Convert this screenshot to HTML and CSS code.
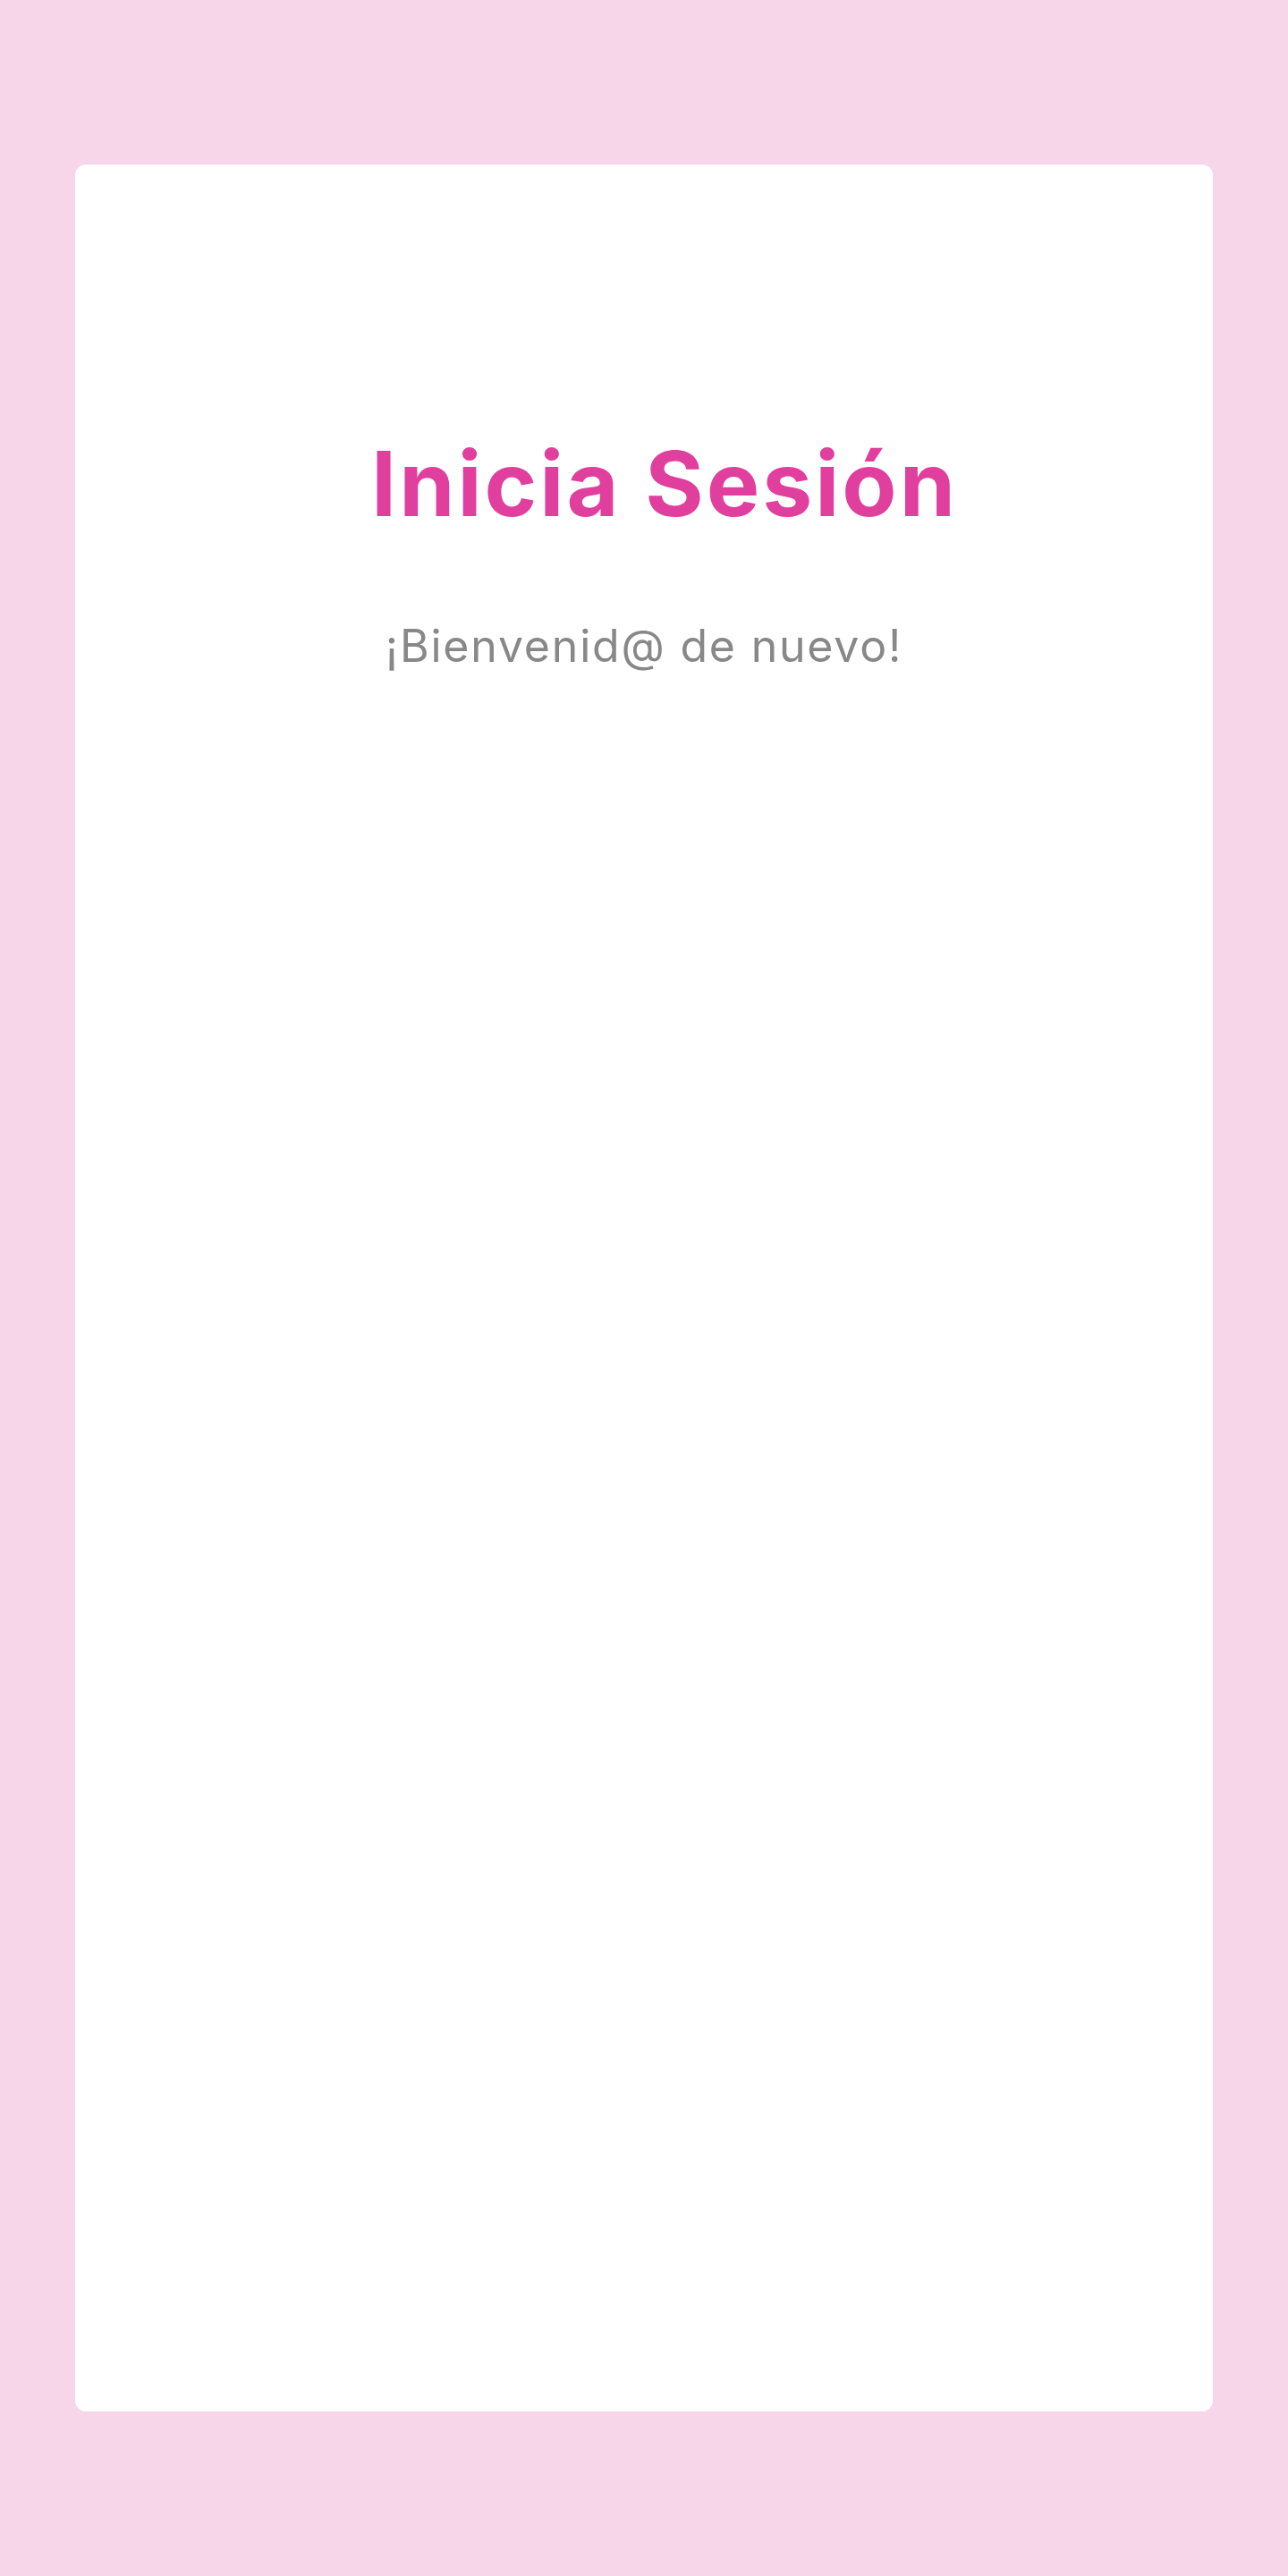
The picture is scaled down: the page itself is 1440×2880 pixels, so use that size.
FILE: index.html
```html
<!DOCTYPE html>
<html lang="es">
<head>
<meta charset="utf-8">
<title>Inicia Sesión</title>
<link rel="stylesheet" href="styles.css">
</head>
<body>
<main class="page">
  <section class="card">
    <h1 class="title">Inicia Sesión</h1>
    <p class="subtitle">¡Bienvenid@ de nuevo!</p>
  </section>
</main>
</body>
</html>
```

FILE: styles.css
```css
html, body {
  margin: 0;
  padding: 0;
  background: #f7d6e9;
}
.page {
  padding: 184px 84px;
  min-height: 2880px;
  box-sizing: border-box;
}
.card {
  background: #ffffff;
  border-radius: 12px;
  height: 2512px;
  box-sizing: border-box;
  padding-top: 297px;
  display: flex;
  flex-direction: column;
  align-items: center;
}
.title {
  margin: 0;
  padding-left: 46px;
  font-family: Inter, "Noto Sans", sans-serif;
  font-weight: 700;
  font-size: 100px;
  line-height: 120px;
  color: #e03f9e;
  letter-spacing: 3px;
}
.subtitle {
  margin: 0;
  margin-top: 91px;
  font-family: Inter, "Noto Sans", sans-serif;
  font-weight: 400;
  font-size: 50px;
  line-height: 60px;
  color: #888888;
  letter-spacing: 1.8px;
}
```
